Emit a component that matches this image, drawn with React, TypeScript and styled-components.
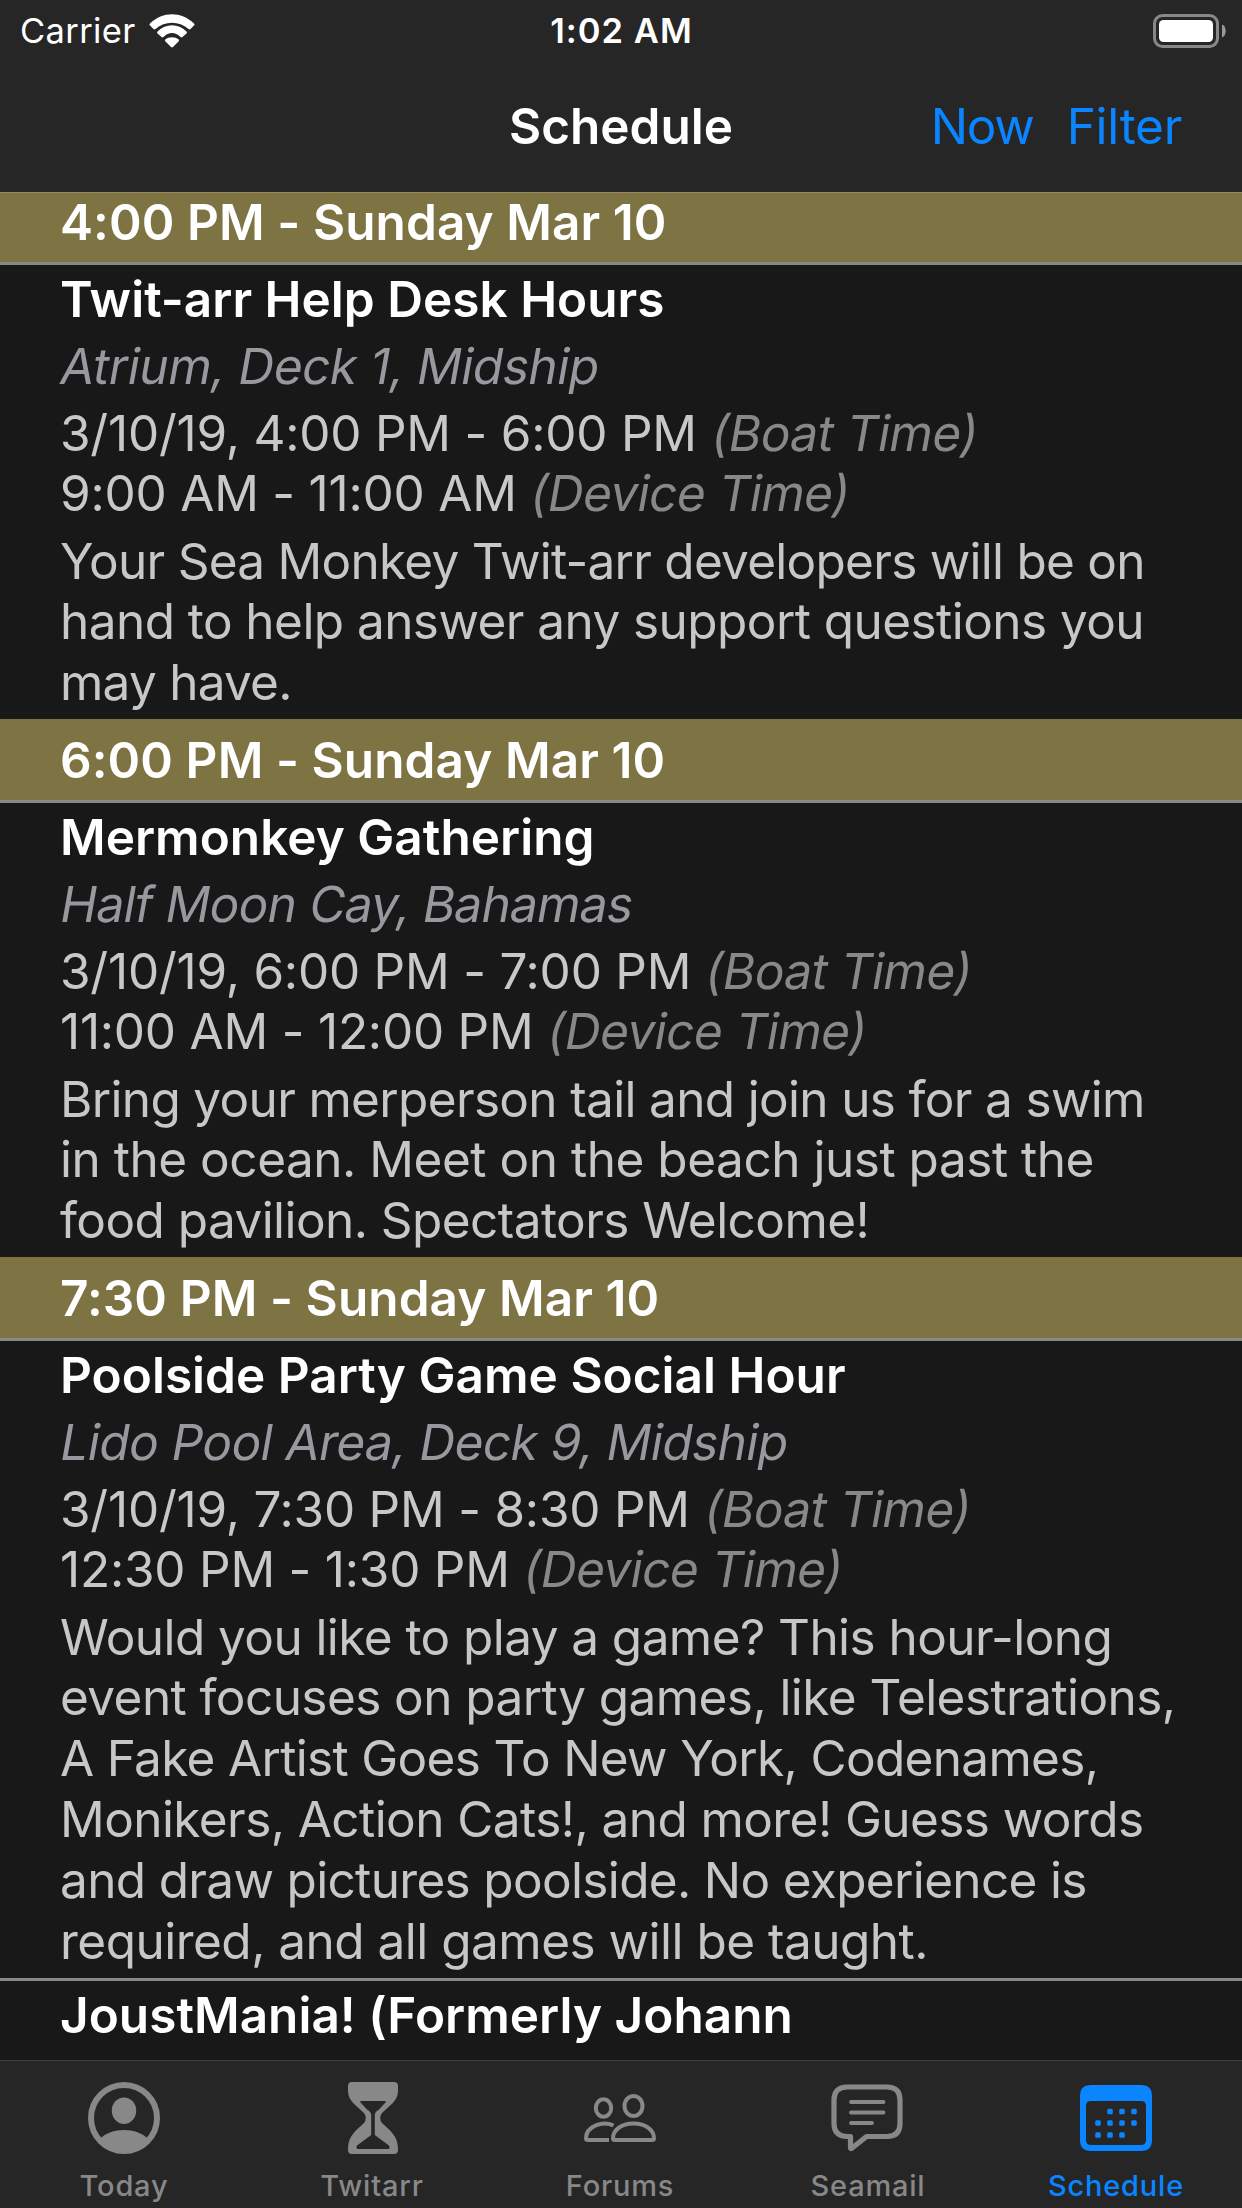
import React from "react";
import styled, { createGlobalStyle } from "styled-components";

const Global = createGlobalStyle`
  body { margin: 0; background: #181818; }
  * { box-sizing: border-box; }
`;

const Screen = styled.div`
  width: 1242px;
  height: 2208px;
  display: flex;
  flex-direction: column;
  overflow: hidden;
  background: #181818;
  color: #fff;
  font-family: Inter, "Liberation Sans", sans-serif;
  font-size: 49.5px;
  line-height: 60.86px;
  white-space: nowrap;
`;

const TopBar = styled.header`
  flex: none;
  height: 192px;
  display: flex;
  flex-direction: column;
  background: #262626;
`;

const StatusBar = styled.div`
  height: 60px;
  padding: 0 16px 0 20px;
  display: grid;
  grid-template-columns: 1fr auto 1fr;
  align-items: center;
  font-size: 34.5px;
  line-height: 62px;
`;

const Carrier = styled.div`
  display: flex;
  align-items: center;
  gap: 13px;
  letter-spacing: 0.35px;
`;

const Clock = styled.div`
  font-weight: 600;
  letter-spacing: 1px;
  margin-right: 3px;
`;

const Battery = styled.svg`
  justify-self: end;
`;

const NavBar = styled.div`
  height: 132px;
  padding: 1px 60px 0 0;
  display: grid;
  grid-template-columns: 1fr auto 1fr;
  align-items: center;
`;

const NavTitle = styled.h1`
  grid-column: 2;
  margin: 0 0 0 60px;
  font-size: inherit;
  font-weight: 600;
  letter-spacing: 0;
`;

const NavActions = styled.div`
  display: flex;
  justify-content: flex-end;
  gap: 33px;
`;

const NavButton = styled.button<{ $track: number }>`
  border: 0;
  padding: 0;
  background: none;
  color: #0a84ff;
  font: inherit;
  letter-spacing: ${(p) => p.$track}px;
`;

const List = styled.main`
  flex: none;
  height: 1868px;
  overflow: hidden;
  border-top: 1px solid #978a5f;
`;

const Feed = styled.div`
  margin-top: -12px;
`;

const TimeHeader = styled.h2`
  margin: 0;
  height: 81px;
  padding: 10.5px 60px 0;
  background: #7e7443;
  font-size: inherit;
  font-weight: 600;
  letter-spacing: 0.08px;
`;

const Event = styled.article`
  border-top: 3px solid #888;
  padding: 4px 60px 6px;
  display: flex;
  flex-direction: column;
  gap: 6px;
`;

const EventTitle = styled.h3`
  margin: 0;
  font-size: inherit;
  font-weight: 600;
  letter-spacing: 0.02px;
`;

const Slanted = styled.em`
  display: inline-block;
  font-style: normal;
  transform: skewX(-10deg);
  transform-origin: 0 80%;
`;

const Place = styled(Slanted)<{ $track?: number }>`
  align-self: flex-start;
  margin-left: -2px;
  color: #98989f;
  letter-spacing: ${(p) => p.$track ?? -0.5}px;
`;

const Times = styled.div`
  color: #c8c8c8;
  letter-spacing: -0.22px;
  line-height: 60.4px;
  padding-bottom: 0.9px;
`;

const Zone = styled(Slanted)`
  margin-left: -2px;
  color: #888;
  letter-spacing: -0.55px;
`;

const Description = styled.p`
  margin: 0.2px 0 -0.2px;
  color: #c7c7c9;
`;

const Line = styled.span<{ $track: number }>`
  display: block;
  letter-spacing: ${(p) => p.$track}px;
`;

const TabBar = styled.nav`
  flex: 1;
  border-top: 1px solid #3f3f3f;
  padding: 9px 1px 0 0;
  display: grid;
  grid-template-columns: repeat(5, 248px);
  background: #262626;
`;

const Tab = styled.div<{ $active?: boolean }>`
  display: flex;
  flex-direction: column;
  align-items: center;
  color: ${(p) => (p.$active ? "#0a84ff" : "#888")};
  font-size: 29px;
  font-weight: 500;
  line-height: 36px;
  letter-spacing: 0.8px;
`;

const TabIcon = styled.svg`
  width: 110px;
  height: 100px;
  margin-bottom: -2px;
  flex: none;
`;

type Item = {
  title: string;
  place?: string;
  placeTrack?: number;
  boat?: string;
  device?: string;
  text?: [string, number][];
};

const groups: { time: string; items: Item[] }[] = [
  {
    time: "4:00 PM - Sunday Mar 10",
    items: [
      {
        title: "Twit-arr Help Desk Hours",
        place: "Atrium, Deck 1, Midship",
        placeTrack: -0.45,
        boat: "3/10/19, 4:00 PM - 6:00 PM",
        device: "9:00 AM - 11:00 AM",
        text: [
          ["Your Sea Monkey Twit-arr developers will be on", -0.73],
          ["hand to help answer any support questions you", -0.56],
          ["may have.", -0.75],
        ],
      },
    ],
  },
  {
    time: "6:00 PM - Sunday Mar 10",
    items: [
      {
        title: "Mermonkey Gathering",
        place: "Half Moon Cay, Bahamas",
        placeTrack: -0.72,
        boat: "3/10/19, 6:00 PM - 7:00 PM",
        device: "11:00 AM - 12:00 PM",
        text: [
          ["Bring your merperson tail and join us for a swim", -0.66],
          ["in the ocean. Meet on the beach just past the", -0.47],
          ["food pavilion. Spectators Welcome!", -0.56],
        ],
      },
    ],
  },
  {
    time: "7:30 PM - Sunday Mar 10",
    items: [
      {
        title: "Poolside Party Game Social Hour",
        place: "Lido Pool Area, Deck 9, Midship",
        placeTrack: -0.55,
        boat: "3/10/19, 7:30 PM - 8:30 PM",
        device: "12:30 PM - 1:30 PM",
        text: [
          ["Would you like to play a game? This hour-long", -0.57],
          ["event focuses on party games, like Telestrations,", -0.57],
          ["A Fake Artist Goes To New York, Codenames,", -0.67],
          ["Monikers, Action Cats!, and more! Guess words", -0.57],
          ["and draw pictures poolside. No experience is", -0.66],
          ["required, and all games will be taught.", -0.51],
        ],
      },
      { title: "JoustMania! (Formerly Johann" },
    ],
  },
];

const PersonIcon = () => (
  <TabIcon viewBox="0 0 110 100" fill="currentColor">
    <circle cx="55" cy="48" r="33" fill="none" stroke="currentColor" strokeWidth="6" />
    <ellipse cx="55" cy="40.7" rx="12.2" ry="13.3" />
    <path d="M31.500 68.500C37 63 45 60 55 60s18 3 23.500 8.500C74 76.500 65 82.500 55 82.500S36 76.500 31.500 68.500Z" />
  </TabIcon>
);

const HourglassIcon = () => (
  <TabIcon viewBox="-1 0 110 100" fill="currentColor" fillRule="evenodd">
    <path d="M34 12H76Q80 12 80 16V21C80 31 71 36 64 43Q60.500 48 64 53C71 60 80 65 80 79V80Q80 84 76 84H34Q30 84 30 80V79C30 65 39 60 46 53Q49.500 48 46 43C39 36 30 31 30 21V16Q30 12 34 12ZM43 31Q41.500 31 42.500 32.500L49.500 40Q53.200 42 53.200 45V65L39 75.500Q37.500 79 40 79H70Q72.500 79 71 75.500L56.800 65V45Q56.800 42 60.500 40L67.500 32.500Q68.500 31 67 31Z" />
  </TabIcon>
);

const PeopleIcon = () => (
  <TabIcon viewBox="-5 0 110 100" fill="none" stroke="currentColor" strokeWidth="4">
    <ellipse cx="33.500" cy="38" rx="7.700" ry="8.700" />
    <ellipse cx="63.500" cy="36" rx="9" ry="10" />
    <path d="M43.500 55.500C33 50.500 16 56 16 68.500Q16 70 18 70H39" />
    <path d="M45 70Q43 70 43 68.500C43 60 51 53.500 63.500 53.500S84 60 84 68.500Q84 70 82 70Z" />
  </TabIcon>
);

const MessageIcon = () => (
  <TabIcon viewBox="3 0 110 100" fill="none" stroke="currentColor" strokeLinejoin="round" strokeLinecap="round">
    <path
      d="M37 17H77Q90 17 90 30V53.500Q90 66.500 77 66.500H56.500L41.500 78.500Q40.500 79 40.500 77.500V66.500H37Q24 66.500 24 53.500V30Q24 17 37 17Z"
      strokeWidth="5.200"
    />
    <path d="M41 32H73.500M41 42.500H73.500M41 53H62" strokeWidth="3.800" />
  </TabIcon>
);

const CalendarIcon = () => (
  <TabIcon viewBox="0 0 110 100" fill="currentColor">
    <path
      fillRule="evenodd"
      d="M30 15H80Q91 15 91 26V70Q91 81 80 81H30Q19 81 19 70V26Q19 15 30 15ZM30 31Q25 31 25 36V70Q25 75 30 75H80Q85 75 85 70V36Q85 31 80 31Z"
    />
    {[
      [49, 41.5], [61, 41.5], [73, 41.5],
      [37, 53], [49, 53], [61, 53], [73, 53],
      [37, 65], [49, 65], [61, 65],
    ].map(([x, y]) => (
      <rect key={`${x}-${y}`} x={x - 2.8} y={y - 2.8} width="5.600" height="5.600" rx="1.500" />
    ))}
  </TabIcon>
);

const WifiIcon = () => (
  <svg width="46" height="34" viewBox="0 0 46 34" fill="#fff">
    <path d="M1 9.500Q0 10.300 1 11.400L4.500 15Q5.500 15.800 6.500 15C16 6.500 30 6.500 39.500 15Q40.500 15.800 41.500 15L45 11.400Q46 10.300 45 9.500C32-2.800 14-2.800 1 9.500Z" />
    <path d="M8.500 17.500Q7.500 18.500 8.500 19.500L12.500 23Q13.500 23.800 14.500 23C19.500 17.800 26.500 17.800 31.500 23Q32.500 23.800 33.500 23L37.500 19.500Q38.500 18.500 37.500 17.500C29 9 17 9 8.500 17.500Z" />
    <path d="M16.300 25.600Q15.500 26.500 16.300 27.300L22 33Q23 33.800 24 33L29.700 27.300Q30.500 26.500 29.700 25.600C26 22.400 20 22.400 16.300 25.600Z" />
  </svg>
);

const tabs = [
  { label: "Today", Icon: PersonIcon },
  { label: "Twitarr", Icon: HourglassIcon },
  { label: "Forums", Icon: PeopleIcon },
  { label: "Seamail", Icon: MessageIcon },
  { label: "Schedule", Icon: CalendarIcon, active: true },
];

export default function App() {
  return (
    <Screen>
      <Global />
      <TopBar>
        <StatusBar>
          <Carrier>
            Carrier
            <WifiIcon />
          </Carrier>
          <Clock>1:02 AM</Clock>
          <Battery width="73" height="34" viewBox="0 0 73 34">
            <rect x="1.500" y="1.500" width="63" height="31" rx="8" fill="none" stroke="#888" strokeWidth="3" />
            <rect x="6" y="6" width="54" height="22" rx="4.500" fill="#fff" />
            <path d="M69 10.500C74 12.500 74 21.500 69 23.500Z" fill="#999" />
          </Battery>
        </StatusBar>
        <NavBar>
          <NavTitle>Schedule</NavTitle>
          <NavActions>
            <NavButton $track={-1.2}>Now</NavButton>
            <NavButton $track={-0.3}>Filter</NavButton>
          </NavActions>
        </NavBar>
      </TopBar>
      <List>
        <Feed>
          {groups.map((group) => (
            <section key={group.time}>
              <TimeHeader>{group.time}</TimeHeader>
              {group.items.map((item) => (
                <Event key={item.title}>
                  <EventTitle>{item.title}</EventTitle>
                  {item.place && <Place $track={item.placeTrack}>{item.place}</Place>}
                  {item.boat && (
                    <Times>
                      <div>{item.boat} <Zone>(Boat Time)</Zone></div>
                      <div>{item.device} <Zone>(Device Time)</Zone></div>
                    </Times>
                  )}
                  {item.text && (
                    <Description>
                      {item.text.map(([line, track]) => (
                        <Line key={line} $track={track}>{line}</Line>
                      ))}
                    </Description>
                  )}
                </Event>
              ))}
            </section>
          ))}
        </Feed>
      </List>
      <TabBar>
        {tabs.map(({ label, Icon, active }) => (
          <Tab key={label} $active={active}>
            <Icon />
            {label}
          </Tab>
        ))}
      </TabBar>
    </Screen>
  );
}
